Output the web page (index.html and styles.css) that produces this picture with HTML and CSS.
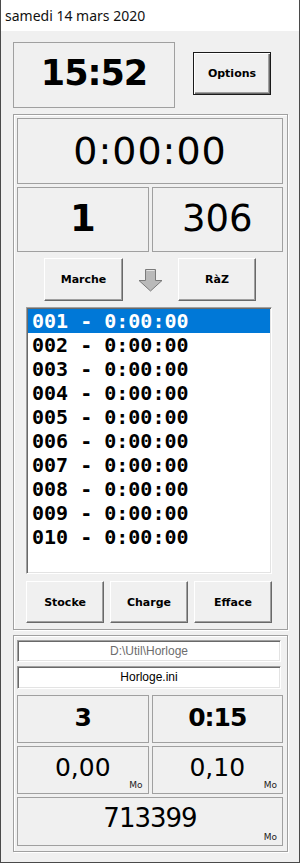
FILE: index.html
```html
<!DOCTYPE html>
<html lang="fr">

<head>
    <meta charset="UTF-8">
    <meta name="viewport" content="width=device-width, initial-scale=1.0">
    <title>Horloge</title>
    <link rel="stylesheet" href="styles.css">
</head>

<body>
    <div class="titlebar">samedi 14 mars 2020</div>
    <div class="main">
        <div class="top">
            <div class="box clock">15:52</div>
            <button class="btn btn-default options">Options</button>
        </div>

        <!-- chrono -->
        <div class="group chrono">
            <div class="box big">0:00:00</div>
            <div class="pair">
                <div class="box mid strong">1</div>
                <div class="box mid">306</div>
            </div>
            <div class="controls">
                <button class="btn marche">Marche</button>
                <svg class="arrow" width="25" height="23" viewBox="0 0 25 23">
                    <path d="M7.5 0.5 H17.5 V11.5 H24 L12.5 22 L1 11.5 H7.5 Z" fill="#b9b9b9" stroke="#7a7a7a" stroke-width="1" />
                    <path d="M8.5 1.5 H16.5" stroke="#e4e4e4" />
                </svg>
                <button class="btn raz">RàZ</button>
            </div>
            <ul class="laps">
                <li class="selected">001 - 0:00:00</li>
                <li>002 - 0:00:00</li>
                <li>003 - 0:00:00</li>
                <li>004 - 0:00:00</li>
                <li>005 - 0:00:00</li>
                <li>006 - 0:00:00</li>
                <li>007 - 0:00:00</li>
                <li>008 - 0:00:00</li>
                <li>009 - 0:00:00</li>
                <li>010 - 0:00:00</li>
            </ul>
            <div class="actions">
                <button class="btn">Stocke</button>
                <button class="btn">Charge</button>
                <button class="btn">Efface</button>
            </div>
        </div>

        <!-- fichier -->
        <div class="group fichier">
            <div class="field path">D:\Util\Horloge</div>
            <div class="field file">Horloge.ini</div>
            <div class="pair">
                <div class="box small strong">3</div>
                <div class="box small strong">0:15</div>
            </div>
            <div class="pair">
                <div class="box small unit">0,00<span class="mo">Mo</span></div>
                <div class="box small unit">0,10<span class="mo">Mo</span></div>
            </div>
            <div class="box wide unit">713399<span class="mo">Mo</span></div>
        </div>
    </div>
</body>

</html>
```

FILE: styles.css
```css
* {
    box-sizing: border-box;
}

body {
    margin: 0;
    width: 300px;
    height: 863px;
    background: #f0f0f0;
    border: 1px solid #4a4a4a;
    border-top: none;
    font-family: "DejaVu Sans", sans-serif;
    color: #000;
}

.titlebar {
    height: 31px;
    line-height: 31px;
    padding-left: 4px;
    background: #fff;
    font-family: "Noto Sans", "Open Sans", sans-serif;
    font-size: 14px;
    color: #111;
}

.main {
    padding: 11px 11px 0 12px;
}

.top {
    display: flex;
    align-items: flex-start;
    height: 66px;
    margin-bottom: 6px;
}

.box {
    display: flex;
    justify-content: center;
    align-items: center;
    border: 1px solid #a0a0a0;
    position: relative;
}

.clock {
    width: 162px;
    height: 66px;
    font-size: 35px;
    font-weight: bold;
    letter-spacing: -1px;
    padding-bottom: 5px;
}

.btn {
    font-family: "DejaVu Sans", sans-serif;
    font-size: 11px;
    font-weight: bold;
    color: #000;
    background: #f0f0f0;
    border: 1px solid;
    border-color: #fff #696969 #696969 #fff;
    box-shadow: inset -1px -1px 0 #a0a0a0;
    padding: 0;
}

.btn-default {
    border: 1px solid #1a1a1a;
    box-shadow: inset 1px 1px 0 #fff, inset -1px -1px 0 #696969, inset -2px -2px 0 #a0a0a0;
}

.options {
    margin: 10px 0 0 18px;
    width: 78px;
    height: 43px;
}

.group {
    border: 1px solid #a0a0a0;
    box-shadow: inset 1px 1px 0 #fff, 1px 1px 0 #fff;
}

.chrono {
    height: 516px;
    padding: 3px 4px 0 3px;
}

.big {
    height: 66px;
    margin-bottom: 3px;
    font-size: 38px;
    letter-spacing: 1px;
}

.pair {
    display: grid;
    grid-template-columns: 1fr 1fr;
    gap: 3px;
}

.mid {
    height: 65px;
    font-size: 37px;
    padding-bottom: 3px;
}

.strong {
    font-weight: bold;
}

.controls {
    display: flex;
    justify-content: center;
    align-items: center;
    gap: 15px;
    margin-top: 6px;
    height: 43px;
}

.marche {
    width: 79px;
    height: 43px;
}

.raz {
    width: 78px;
    height: 43px;
}

.arrow {
    margin-top: 1px;
}

.laps {
    list-style: none;
    margin: 6px 0 0 9px;
    padding: 1px 1px;
    width: 246px;
    height: 267px;
    background: #fff;
    border: 1px solid;
    border-color: #a0a0a0 #fff #fff #a0a0a0;
    box-shadow: inset 1px 1px 0 #696969, inset -1px -1px 0 #e3e3e3;
    font-family: "DejaVu Sans Mono", "Liberation Mono", monospace;
    font-size: 20px;
    font-weight: bold;
}

.laps li {
    height: 24px;
    line-height: 24px;
    padding-left: 4px;
    white-space: pre;
}

.laps .selected {
    background: #0078d7;
    color: #fff;
}

.actions {
    display: grid;
    grid-template-columns: repeat(3, 1fr);
    gap: 6px;
    margin: 7px 0 0 9px;
    width: 246px;
    height: 42px;
}

.fichier {
    margin-top: 5px;
    height: 217px;
    padding: 4px 4px 0 3px;
}

.field {
    height: 22px;
    line-height: 20px;
    margin: 0 2px 4px 0;
    background: #fff;
    border: 1px solid;
    border-color: #a0a0a0 #fff #fff #a0a0a0;
    box-shadow: inset 1px 1px 0 #696969, inset -1px -1px 0 #e3e3e3;
    text-align: center;
    font-family: "Liberation Sans", Arial, sans-serif;
    font-size: 12px;
}

.path {
    color: #6d6d6d;
}

.file {
    height: 23px;
    line-height: 21px;
    margin-bottom: 6px;
}

.fichier .pair {
    margin-bottom: 3px;
}

.small {
    height: 48px;
    font-size: 25px;
    letter-spacing: -1px;
    padding-bottom: 4px;
}

.unit {
    font-weight: normal;
    letter-spacing: 0;
    padding-bottom: 6px;
}

.wide {
    height: 49px;
    margin-top: 1px;
    font-size: 26px;
    letter-spacing: -1px;
    padding-bottom: 8px;
}

.mo {
    position: absolute;
    right: 5px;
    bottom: 3px;
    font-size: 9px;
    letter-spacing: 0;
    color: #222;
}
```
